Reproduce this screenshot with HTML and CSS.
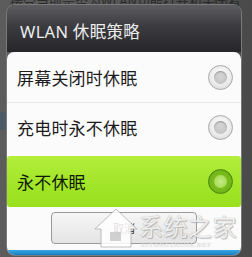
FILE: index.html
```html
<!DOCTYPE html>
<html lang="zh">
<head>
<meta charset="utf-8">
<link rel="stylesheet" href="styles.css">
</head>
<body>
<div class="backdrop">
  <div class="bg-text">接受当前是否为WLAN功能打开和关闭看</div>
  <div class="bg-ring"></div>
  <div class="bg-band"></div>
</div>
<div class="dialog">
  <div class="title">WLAN 休眠策略</div>
  <div class="body">
    <div class="row">
      <span class="label">屏幕关闭时休眠</span>
      <span class="radio"></span>
    </div>
    <div class="row row2">
      <span class="label">充电时永不休眠</span>
      <span class="radio"></span>
    </div>
    <div class="row selected">
      <span class="label">永不休眠</span>
      <span class="radio on"></span>
    </div>
    <div class="actions">
      <div class="btn">取消</div>
    </div>
    <div class="strip"></div>
  </div>
</div>
<div class="watermark">
  <svg class="wm-logo" width="46" height="44" viewBox="0 0 46 44"><path d="M2 24 L23 4 L44 24 L38 24 L38 42 L8 42 L8 24 Z" fill="rgba(255,255,255,0.85)" stroke="rgba(150,150,150,0.6)" stroke-width="1"/><rect x="17" y="27" width="11" height="9" fill="rgba(190,190,190,0.7)"/></svg>
  <span class="wm-text">系统之家</span>
  <span class="wm-sub">XITONGZHIJIA.NET</span>
</div>
</body>
</html>
```
FILE: styles.css
```css
html, body {
  margin: 0;
  padding: 0;
}
body {
  width: 252px;
  height: 257px;
  overflow: hidden;
  position: relative;
  background: #575757;
  font-family: "Noto Sans CJK SC", "Noto Sans", sans-serif;
}
.backdrop {
  height: 257px;
  background: linear-gradient(to right, #5c5c5c 0%, #535353 60%, #4a4a4a 100%);
  position: relative;
}
.bg-text {
  position: absolute;
  left: 10px;
  top: -9px;
  font-size: 13px;
  color: #2a2a2a;
  white-space: nowrap;
}
.bg-ring {
  position: absolute;
  left: 214px;
  top: -12px;
  width: 18px;
  height: 18px;
  border: 1px solid #2e2e2e;
  border-radius: 50%;
}
.bg-band {
  position: absolute;
  left: 0;
  top: 112px;
  width: 10px;
  height: 18px;
  background: #4c5a68;
}
.dialog {
  position: absolute;
  left: 7px;
  top: 5px;
  width: 234px;
  height: 250px;
  border-radius: 8px;
  overflow: hidden;
  display: flex;
  flex-direction: column;
  box-shadow: 0 0 0 1px #7a7a7a;
}
.title {
  height: 47px;
  box-sizing: border-box;
  padding: 16px 0 0 13px;
  background: linear-gradient(to bottom, #5c5c61 0%, #3c3c40 45%, #26262a 100%);
  color: #ececec;
  font-size: 16.5px;
  line-height: 22px;
  font-family: "Noto Sans", "Noto Sans CJK SC", sans-serif;
  letter-spacing: 0.3px;
}
.body {
  flex: 1;
  background: #fbfbfb;
  border-radius: 7px 7px 0 0;
  display: flex;
  flex-direction: column;
}
.row {
  height: 51px;
  display: flex;
  align-items: center;
  justify-content: space-between;
  padding: 0 8px 0 10px;
  border-bottom: 1px solid #e7e7e7;
  box-sizing: border-box;
}
.row2 {
  height: 48px;
  border-bottom: none;
  margin-bottom: 5px;
}
.label {
  font-size: 17px;
  color: #1c1c1c;
  letter-spacing: 0.2px;
}
.radio {
  width: 25px;
  height: 25px;
  border-radius: 50%;
  box-sizing: border-box;
  border: 1px solid #a9a9a9;
  background: radial-gradient(circle at 50% 40%, #ffffff 0%, #ececec 55%, #cfcfcf 100%);
  display: flex;
  align-items: center;
  justify-content: center;
}
.radio::after {
  content: "";
  width: 13px;
  height: 13px;
  border-radius: 50%;
  background: radial-gradient(circle at 50% 40%, #d6d6d6 0%, #bdbdbd 100%);
  box-shadow: inset 0 1px 1px #9a9a9a;
}
.selected {
  height: 51px;
  border-bottom: none;
  border-radius: 3px;
  background: linear-gradient(to bottom, #b4ee3a 0%, #a3e62a 50%, #98e01e 100%);
}
.selected .label {
  color: #101a02;
}
.radio.on {
  border: 1px solid #4c8412;
  background: radial-gradient(circle, #86c624 0%, #74b818 60%, #5e9e10 100%);
}
.radio.on::after {
  background: radial-gradient(circle, #c2eb80 0%, #9ed548 100%);
  box-shadow: none;
}
.actions {
  flex: 1;
  display: flex;
  justify-content: center;
  align-items: flex-start;
  padding-top: 5px;
}
.btn {
  width: 146px;
  height: 32px;
  box-sizing: border-box;
  border: 1px solid #9a9a9a;
  border-radius: 4px;
  background: linear-gradient(to bottom, #f6f6f6 0%, #e4e4e4 100%);
  display: flex;
  align-items: center;
  justify-content: center;
  font-size: 11px;
  color: #333;
}
.strip {
  height: 5px;
  background: linear-gradient(to bottom, #3aa6e0, #1580c4);
}
.watermark {
  position: absolute;
  left: 93px;
  top: 203px;
  width: 155px;
  height: 50px;
  pointer-events: none;
}
.wm-logo {
  position: absolute;
  left: 0;
  top: 2px;
}
.wm-text {
  position: absolute;
  left: 46px;
  top: 9px;
  font-size: 24px;
  line-height: 28px;
  color: rgba(255, 255, 255, 0.85);
  text-shadow: 0 0 1px rgba(120, 120, 120, 0.7), 1px 1px 1px rgba(140, 140, 140, 0.5);
  white-space: nowrap;
  letter-spacing: 0.5px;
}
.wm-sub {
  position: absolute;
  left: 48px;
  top: 39px;
  font-size: 6px;
  color: rgba(255, 255, 255, 0.85);
  text-shadow: 0 0 1px rgba(120, 120, 120, 0.7);
  font-family: "Liberation Serif", serif;
  letter-spacing: 1px;
}
```
